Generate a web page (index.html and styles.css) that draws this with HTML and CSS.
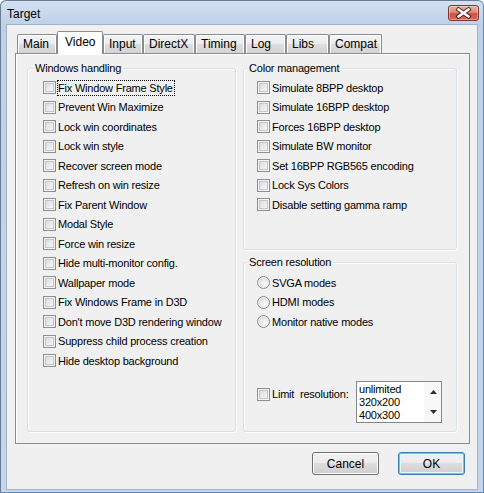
FILE: index.html
```html
<!DOCTYPE html>
<html>
<head>
<meta charset="utf-8">
<link rel="stylesheet" href="styles.css">
</head>
<body>
<div class="window">
  <div class="titlebar">
    <span class="title">Target</span>
    <div class="close">
      <svg width="29" height="14" viewBox="0 0 29 14">
        <path d="M9.5 3.5 L19.5 10.5 M19.5 3.5 L9.5 10.5" stroke="#5a2520" stroke-width="4.4" stroke-linecap="square" fill="none"/>
        <path d="M9.5 3.5 L19.5 10.5 M19.5 3.5 L9.5 10.5" stroke="#ffffff" stroke-width="2.4" stroke-linecap="square" fill="none"/>
      </svg>
    </div>
  </div>
  <div class="client">
    <div class="tabs">
      <div class="tab t-main">Main</div>
      <div class="tab active t-video">Video</div>
      <div class="tab t-input">Input</div>
      <div class="tab t-dx">DirectX</div>
      <div class="tab t-timing">Timing</div>
      <div class="tab t-log">Log</div>
      <div class="tab t-libs">Libs</div>
      <div class="tab t-compat">Compat</div>
    </div>
    <div class="panel">
      <div class="group g-win">
        <span class="legend">Windows handling</span>
        <div class="opt"><span class="cb"></span><span class="lbl focus">Fix Window Frame Style</span></div>
        <div class="opt"><span class="cb"></span><span class="lbl">Prevent Win Maximize</span></div>
        <div class="opt"><span class="cb"></span><span class="lbl">Lock win coordinates</span></div>
        <div class="opt"><span class="cb"></span><span class="lbl">Lock win style</span></div>
        <div class="opt"><span class="cb"></span><span class="lbl">Recover screen mode</span></div>
        <div class="opt"><span class="cb"></span><span class="lbl">Refresh on win resize</span></div>
        <div class="opt"><span class="cb"></span><span class="lbl">Fix Parent Window</span></div>
        <div class="opt"><span class="cb"></span><span class="lbl">Modal Style</span></div>
        <div class="opt"><span class="cb"></span><span class="lbl">Force win resize</span></div>
        <div class="opt"><span class="cb"></span><span class="lbl">Hide multi-monitor config.</span></div>
        <div class="opt"><span class="cb"></span><span class="lbl">Wallpaper mode</span></div>
        <div class="opt"><span class="cb"></span><span class="lbl">Fix Windows Frame in D3D</span></div>
        <div class="opt"><span class="cb"></span><span class="lbl">Don't move D3D rendering window</span></div>
        <div class="opt"><span class="cb"></span><span class="lbl">Suppress child process creation</span></div>
        <div class="opt"><span class="cb"></span><span class="lbl">Hide desktop background</span></div>
      </div>
      <div class="col">
        <div class="group g-color">
          <span class="legend">Color management</span>
          <div class="opt"><span class="cb"></span><span class="lbl">Simulate 8BPP desktop</span></div>
          <div class="opt"><span class="cb"></span><span class="lbl">Simulate 16BPP desktop</span></div>
          <div class="opt"><span class="cb"></span><span class="lbl">Forces 16BPP desktop</span></div>
          <div class="opt"><span class="cb"></span><span class="lbl">Simulate BW monitor</span></div>
          <div class="opt"><span class="cb"></span><span class="lbl">Set 16BPP RGB565 encoding</span></div>
          <div class="opt"><span class="cb"></span><span class="lbl">Lock Sys Colors</span></div>
          <div class="opt"><span class="cb"></span><span class="lbl">Disable setting gamma ramp</span></div>
        </div>
        <div class="group g-screen">
          <span class="legend">Screen resolution</span>
          <div class="opt"><span class="rb"></span><span class="lbl">SVGA modes</span></div>
          <div class="opt"><span class="rb"></span><span class="lbl">HDMI modes</span></div>
          <div class="opt"><span class="rb"></span><span class="lbl">Monitor native modes</span></div>
          <div class="limit">
            <div class="opt"><span class="cb"></span><span class="lbl">Limit&nbsp; resolution:</span></div>
            <div class="list">
              <div class="items">
                <div>unlimited</div>
                <div>320x200</div>
                <div>400x300</div>
              </div>
              <div class="sb">
                <div class="sb-btn"><svg width="7" height="4" viewBox="0 0 7 4"><path d="M3.5 0 L7 4 L0 4 Z" fill="#2e2e2e"/></svg></div>
                <div class="sb-btn"><svg width="7" height="4" viewBox="0 0 7 4"><path d="M0 0 L7 0 L3.5 4 Z" fill="#2e2e2e"/></svg></div>
              </div>
            </div>
          </div>
        </div>
      </div>
    </div>
    <div class="buttons">
      <button class="btn">Cancel</button>
      <button class="btn default">OK</button>
    </div>
  </div>
</div>
</body>
</html>
```

FILE: styles.css
```css
* { box-sizing: border-box; }
html, body { margin: 0; padding: 0; }
body {
  width: 484px;
  height: 493px;
  background: #ffffff;
  font-family: "Liberation Sans", Arial, sans-serif;
  font-size: 11px;
  color: #000;
}
.window {
  width: 484px;
  height: 493px;
  border: 1px solid #6b7d94;
  border-right-color: #5a8ec2;
  border-bottom-color: #5a8ec2;
  border-radius: 6px 6px 0 0;
  background: linear-gradient(#d3e1f2 0, #bed1e9 24px, #c4d6ec 100%);
  display: flex;
  flex-direction: column;
}
.titlebar {
  height: 24px;
  flex: none;
  display: flex;
  align-items: center;
  justify-content: space-between;
  padding: 0 4px 0 6px;
}
.title {
  font-size: 12px;
  line-height: 14px;
  padding-top: 2px;
}
.close {
  width: 31px;
  height: 16px;
  border: 1px solid #7a3731;
  border-radius: 3px;
  background: linear-gradient(#eab0a2 0, #dc8b78 45%, #c9523f 55%, #d26e5a 100%);
  box-shadow: inset 0 0 0 1px rgba(255, 255, 255, 0.35);
  display: flex;
}
.client {
  flex: 1;
  margin: 0 6px 3px;
  background: #f0f0f0;
  box-shadow: 0 0 0 1px #9fb3cb;
  display: flex;
  flex-direction: column;
}
.tabs {
  display: flex;
  align-items: flex-end;
  height: 22px;
  margin: 6px 0 0 10px;
}
.tab {
  height: 19px;
  border: 1px solid #898c95;
  border-bottom: 0;
  border-radius: 2px 2px 0 0;
  background: linear-gradient(#f4f4f4 0, #ececec 50%, #dedede 50%, #d3d3d3 100%);
  box-shadow: inset 1px 1px 0 #fff, inset -1px 0 0 #fff;
  padding-left: 5px;
  font-size: 12px;
  line-height: 18px;
  white-space: nowrap;
}
.tab.active {
  height: 23px;
  margin-bottom: -1px;
  background: #ffffff;
  box-shadow: none;
  padding-left: 7px;
  line-height: 20px;
  position: relative;
  z-index: 1;
}
.t-main { width: 40px; }
.t-video { width: 46px; }
.t-input { width: 40px; }
.t-dx { width: 52px; }
.t-timing { width: 50px; }
.t-log { width: 41px; }
.t-libs { width: 43px; }
.t-compat { width: 53px; }

.panel {
  margin-left: 8px;
  width: 455px;
  height: 391px;
  border: 1px solid #898c95;
  box-shadow: inset 1px 1px 0 #fff;
  padding: 14px 12px 11px 11px;
  display: flex;
  gap: 7px;
}
.group {
  position: relative;
  border: 1px solid #d5dfe5;
  border-radius: 3px;
  box-shadow: inset 1px 1px 0 #fff, 1px 1px 0 #fff;
}
.legend {
  position: absolute;
  top: -8px;
  left: 3px;
  padding: 0 2px;
  background: #f0f0f0;
  line-height: 14px;
  letter-spacing: -0.2px;
  white-space: nowrap;
}
.g-win .legend { left: 5px; }
.g-win {
  width: 209px;
  height: 364px;
  padding: 9px 0 0 15px;
}
.col {
  width: 214px;
  display: flex;
  flex-direction: column;
  gap: 12px;
}
.g-color {
  height: 182px;
  padding: 9px 0 0 13px;
}
.g-screen {
  height: 170px;
  padding: 10px 14px 8px 13px;
  display: flex;
  flex-direction: column;
}
.opt {
  display: flex;
  align-items: center;
  height: 19.5px;
  letter-spacing: -0.2px;
  white-space: nowrap;
}
.cb {
  width: 13px;
  height: 13px;
  flex: none;
  border: 1px solid #8e8f8f;
  background: linear-gradient(135deg, #d3d6da 0, #e9eaec 50%, #fafafa 100%);
  box-shadow: inset 0 0 0 1px #f4f4f4, inset 0 0 0 2px #c3c7cc;
}
.rb {
  width: 13px;
  height: 13px;
  flex: none;
  border-radius: 50%;
  border: 1px solid #8e8f8f;
  background: radial-gradient(circle at 62% 62%, #fbfbfb 0, #e8e8e8 45%, #c8c8c8 100%);
  box-shadow: inset 0 0 0 1px #f2f2f2;
}
.lbl {
  margin-left: 2px;
  line-height: 14px;
}
.lbl.focus {
  margin-left: 1px;
  border: 1px dotted #000;
  padding-right: 1px;
}
.limit {
  margin-top: auto;
  display: flex;
  align-items: flex-start;
}
.limit .opt {
  margin-top: 3.25px;
}
.list {
  margin-left: auto;
  width: 86px;
  height: 42px;
  border: 1px solid #828790;
  background: #ffffff;
  display: flex;
}
.items {
  flex: 1;
  padding: 1px 0 0 2px;
  line-height: 13px;
  letter-spacing: -0.2px;
}
.sb {
  width: 17px;
  display: flex;
  flex-direction: column;
  background: #f8f8f8;
}
.sb-btn {
  flex: 1;
  display: flex;
  align-items: center;
  justify-content: center;
  padding-left: 2px;
}
.sb-btn svg { display: block; }
.buttons {
  display: flex;
  justify-content: flex-end;
  gap: 19px;
  padding-right: 12px;
  margin-top: 8px;
}
.btn {
  width: 67px;
  height: 23px;
  padding: 0;
  border: 1px solid #707070;
  border-radius: 3px;
  background: linear-gradient(#f2f2f2 0, #ebebeb 50%, #dddddd 50%, #cfcfcf 100%);
  box-shadow: inset 0 0 0 1px #fbfbfb;
  font-family: "Liberation Sans", Arial, sans-serif;
  font-size: 12px;
  color: #000;
}
.btn.default {
  border-color: #3c7fb1;
  box-shadow: inset 0 0 0 1px #5fcdf8, inset 0 0 0 2px #e6f5fc;
}
```
